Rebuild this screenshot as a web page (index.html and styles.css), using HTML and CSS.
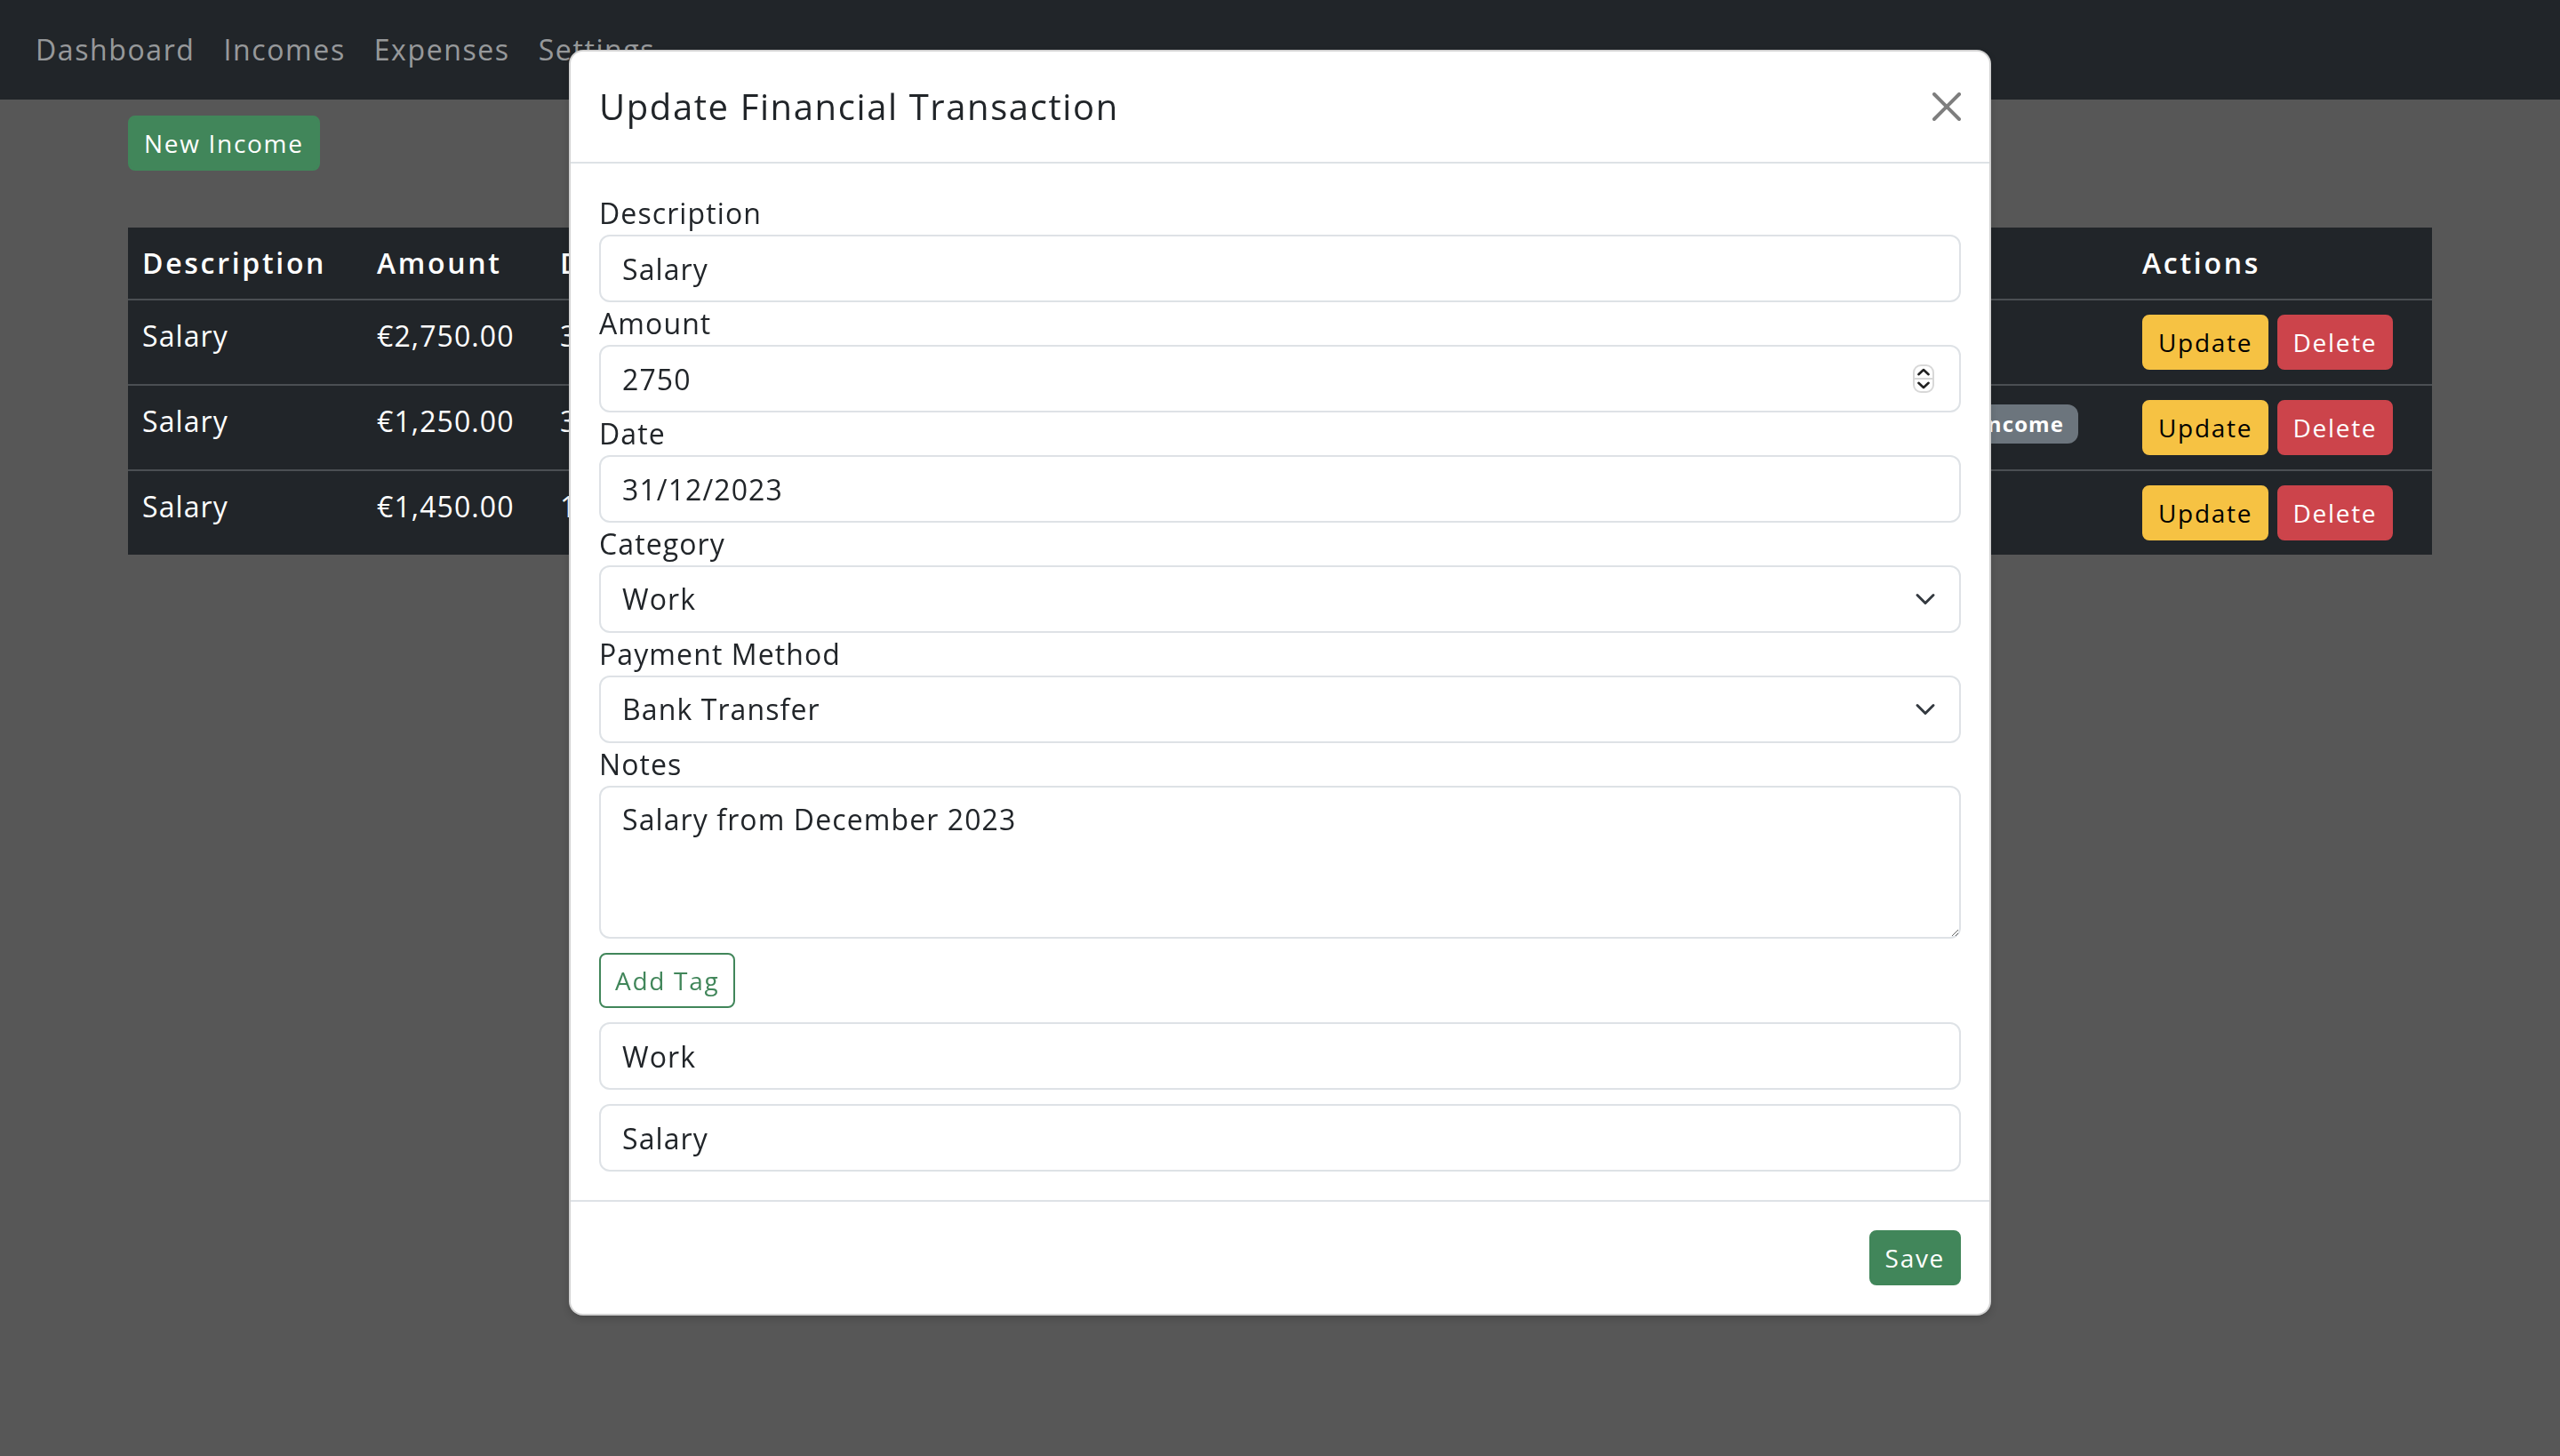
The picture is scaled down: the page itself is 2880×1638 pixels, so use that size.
FILE: index.html
```html
<!DOCTYPE html>
<html lang="en">
<head>
<meta charset="utf-8">
<title>Incomes</title>
<link rel="stylesheet" href="styles.css">
</head>
<body>
<nav class="navbar">
  <a class="nav-link" href="#">Dashboard</a>
  <a class="nav-link" href="#">Incomes</a>
  <a class="nav-link" href="#">Expenses</a>
  <a class="nav-link" href="#">Settings</a>
</nav>

<main class="container">
  <button class="btn btn-sm btn-success new-btn">New Income</button>
  <table class="table">
    <colgroup>
      <col class="c-desc"><col class="c-amount"><col class="c-date"><col class="c-cat">
      <col class="c-pay"><col class="c-notes"><col class="c-tags"><col class="c-actions">
    </colgroup>
    <thead>
      <tr>
        <th>Description</th><th>Amount</th><th>Date</th><th>Category</th>
        <th>Payment Method</th><th>Notes</th><th>Tags</th><th>Actions</th>
      </tr>
    </thead>
    <tbody>
      <tr>
        <td>Salary</td><td>€2,750.00</td><td>31/12/2023</td><td>Work</td>
        <td>Bank Transfer</td><td>Salary from December 2023</td>
        <td><span class="badge">Work</span></td>
        <td><button class="btn btn-sm btn-warning">Update</button> <button class="btn btn-sm btn-danger">Delete</button></td>
      </tr>
      <tr>
        <td>Salary</td><td>€1,250.00</td><td>30/11/2023</td><td>Work</td>
        <td>Bank Transfer</td><td>Bonus payment</td>
        <td><span class="badge">Additional Income</span></td>
        <td><button class="btn btn-sm btn-warning">Update</button> <button class="btn btn-sm btn-danger">Delete</button></td>
      </tr>
      <tr>
        <td>Salary</td><td>€1,450.00</td><td>15/10/2023</td><td>Work</td>
        <td>Bank Transfer</td><td>Salary from October 2023</td>
        <td></td>
        <td><button class="btn btn-sm btn-warning">Update</button> <button class="btn btn-sm btn-danger">Delete</button></td>
      </tr>
    </tbody>
  </table>
</main>

<div class="modal">
  <div class="modal-content">
    <div class="modal-header">
      <h5 class="modal-title">Update Financial Transaction</h5>
      <button class="btn-close" aria-label="Close">
        <svg viewBox="0 0 16 16" width="16" height="16"><path fill="#000" d="M.293.293a1 1 0 0 1 1.414 0L8 6.586 14.293.293a1 1 0 1 1 1.414 1.414L9.414 8l6.293 6.293a1 1 0 0 1-1.414 1.414L8 9.414l-6.293 6.293a1 1 0 0 1-1.414-1.414L6.586 8 .293 1.707a1 1 0 0 1 0-1.414z"/></svg>
      </button>
    </div>
    <div class="modal-body">
      <label>Description</label>
      <input class="form-control" type="text" value="Salary">
      <label>Amount</label>
      <div class="field-wrap">
        <input class="form-control" type="text" value="2750">
        <svg class="spinner" viewBox="0 0 12 16" width="12" height="16">
          <rect x="0.5" y="0.5" width="11" height="15" rx="4" fill="#fff" stroke="#d8d8d8"/>
          <line x1="0.5" y1="8" x2="11.5" y2="8" stroke="#d8d8d8"/>
          <path d="M3.2 5.6 6 3 8.8 5.6" fill="none" stroke="#222" stroke-width="1.3" stroke-linecap="round" stroke-linejoin="round"/>
          <path d="M3.2 10.4 6 13 8.8 10.4" fill="none" stroke="#222" stroke-width="1.3" stroke-linecap="round" stroke-linejoin="round"/>
        </svg>
      </div>
      <label>Date</label>
      <input class="form-control" type="text" value="31/12/2023">
      <label>Category</label>
      <div class="field-wrap">
        <select class="form-control form-select"><option>Work</option></select>
        <svg class="chevron" viewBox="0 0 16 16" width="16" height="12"><path fill="none" stroke="#343a40" stroke-linecap="round" stroke-linejoin="round" stroke-width="2" d="m2 5 6 6 6-6"/></svg>
      </div>
      <label>Payment Method</label>
      <div class="field-wrap">
        <select class="form-control form-select"><option>Bank Transfer</option></select>
        <svg class="chevron" viewBox="0 0 16 16" width="16" height="12"><path fill="none" stroke="#343a40" stroke-linecap="round" stroke-linejoin="round" stroke-width="2" d="m2 5 6 6 6-6"/></svg>
      </div>
      <label>Notes</label>
      <textarea class="form-control notes" rows="3">Salary from December 2023</textarea>
      <button class="btn btn-sm btn-outline-success add-tag">Add Tag</button>
      <input class="form-control tag-input" type="text" value="Work">
      <input class="form-control tag-input" type="text" value="Salary">
    </div>
    <div class="modal-footer">
      <button class="btn btn-sm btn-success save-btn">Save</button>
    </div>
  </div>
</div>
</body>
</html>
```

FILE: styles.css
```css
html {
  zoom: 2;
}

body {
  margin: 0;
  background: #575757;
  font-family: "Open Sans", "Liberation Sans", sans-serif;
  font-size: 16px;
  line-height: 1.5;
  color: #212529;
  letter-spacing: 0.55px;
  height: 819px;
  overflow: hidden;
}

/* Navbar */
.navbar {
  background: #212529;
  height: 56px;
  display: flex;
  align-items: center;
  padding: 0 12px;
  box-sizing: border-box;
}

.nav-link {
  color: rgba(255, 255, 255, 0.55);
  text-decoration: none;
  padding: 8px;
  letter-spacing: 0.8px;
}

/* Container */
.container {
  width: 1296px;
  margin: 0 auto;
}

/* Buttons */
.btn {
  display: inline-block;
  font-family: inherit;
  letter-spacing: inherit;
  border: 1px solid transparent;
  cursor: pointer;
  line-height: 1.5;
  vertical-align: middle;
}

.btn-sm {
  padding: 4px 8px;
  font-size: 14px;
  border-radius: 4px;
  letter-spacing: 0.85px;
}

.btn-success {
  background: #41865a;
  border-color: #41865a;
  color: #fff;
}

.btn-warning {
  background: #f6c243;
  border-color: #f6c243;
  color: #000;
}

.btn-danger {
  background: #cc444b;
  border-color: #cc444b;
  color: #fff;
}

.btn-outline-success {
  background: transparent;
  border-color: #41865a;
  color: #41865a;
}

.new-btn {
  margin-top: 9px;
}

/* Table */
.table {
  width: 100%;
  margin-top: 32px;
  border-collapse: collapse;
  table-layout: fixed;
  background: #212529;
  color: #fff;
}

.table th,
.table td {
  padding: 8px;
  text-align: left;
  vertical-align: top;
  border-bottom: 1px solid #4b4f53;
  white-space: nowrap;
  overflow: hidden;
}

.table tbody tr:last-child td {
  border-bottom: none;
}

.table th {
  font-weight: 600;
  letter-spacing: 1.35px;
}

.c-desc { width: 132px; }
.c-amount { width: 103px; }
.c-date { width: 130px; }
.c-cat { width: 130px; }
.c-pay { width: 170px; }
.c-notes { width: 289px; }
.c-tags { width: 171px; }
.c-actions { width: 171px; }

.badge {
  display: inline-block;
  background: #6c757d;
  color: #fff;
  font-size: 12px;
  font-weight: 700;
  line-height: 1;
  padding: 5px 8px;
  border-radius: 6px;
  margin-top: 2px;
}

/* Modal */
.modal {
  position: fixed;
  top: 0;
  left: 0;
  right: 0;
  bottom: 0;
  display: flex;
  justify-content: center;
  align-items: flex-start;
  padding-top: 28px;
}

.modal-content {
  width: 798px;
  background: #fff;
  border: 1px solid rgba(0, 0, 0, 0.175);
  border-radius: 8px;
  box-shadow: 0 2px 4px rgba(0, 0, 0, 0.15);
}

.modal-header {
  display: flex;
  align-items: center;
  justify-content: space-between;
  padding: 16px;
  border-bottom: 1px solid #dee2e6;
}

.modal-title {
  margin: 0;
  font-size: 20px;
  font-weight: 500;
  line-height: 1.5;
  letter-spacing: 0.8px;
}

.btn-close {
  border: 0;
  background: transparent;
  padding: 0;
  width: 16px;
  height: 16px;
  opacity: 0.5;
  display: flex;
}

.modal-body {
  padding: 16px;
}

.modal-body label {
  display: block;
}

.form-control {
  display: block;
  width: 100%;
  box-sizing: border-box;
  padding: 6px 12px;
  font-family: inherit;
  font-size: 16px;
  letter-spacing: inherit;
  line-height: 1.5;
  color: #212529;
  background: #fff;
  border: 1px solid #dee2e6;
  border-radius: 6px;
  margin: 0;
  height: 38px;
}

.form-select {
  appearance: none;
  -webkit-appearance: none;
  padding-right: 36px;
}

.field-wrap {
  position: relative;
}

.spinner {
  position: absolute;
  right: 15px;
  top: 11px;
}

.chevron {
  position: absolute;
  right: 12px;
  top: 13px;
  pointer-events: none;
}

.notes {
  height: 86px;
  resize: vertical;
}

.add-tag {
  margin-top: 8px;
}

.tag-input {
  margin-top: 8px;
}

.modal-footer {
  display: flex;
  justify-content: flex-end;
  padding: 12px;
  border-top: 1px solid #dee2e6;
}

.save-btn {
  margin: 4px;
}
```
